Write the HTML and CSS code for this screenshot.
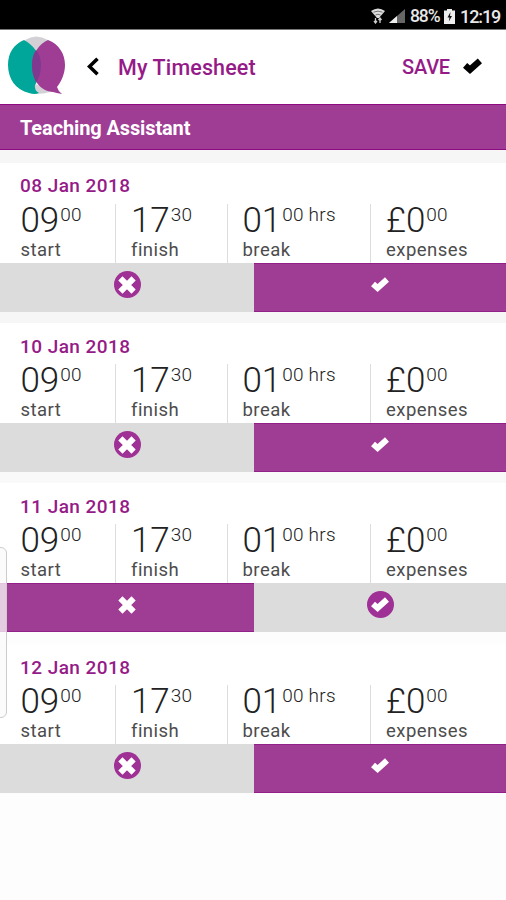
FILE: index.html
```html
<!DOCTYPE html>
<html lang="en">
<head>
<meta charset="utf-8">
<title>My Timesheet</title>
<link rel="stylesheet" href="styles.css">
</head>
<body>
<svg class="defs" aria-hidden="true">
  <symbol id="cross" viewBox="0 0 18 18"><path d="M2.4 2.4 15.6 15.6M15.6 2.4 2.4 15.6" fill="none" stroke="currentColor" stroke-width="6"/></symbol>
  <symbol id="check" viewBox="0 0 18 15"><path d="M2 7 6.6 11 16 2.6" fill="none" stroke="currentColor" stroke-width="6"/></symbol>
</svg>
<div class="status">
  <svg class="wifi" viewBox="0 0 14 16"><path d="M0 3Q7-2 14 3L8 10H6Z" fill="#ddd"/><path d="M2.5 4.2Q7 2 11.5 4.2M4.5 7Q7 5.5 9.5 7" stroke="#555" fill="none" stroke-width=".8"/><path d="M4.5 10v5M3 13l1.5 2L6 13M9 15v-5M7.5 12 9 10l1.5 2" stroke="#ccc" fill="none" stroke-width="1.3"/></svg>
  <svg class="signal" viewBox="0 0 16 14"><path d="M0 14 16 0V14Z" fill="#666"/><path d="M0 14 8 7V14Z" fill="#eee"/></svg>
  <span class="percent">88%</span>
  <svg class="battery" viewBox="0 0 11 15"><path d="M3 0h5v1.5h3V15H0V1.5h3Z" fill="#eee"/><path d="M6.5 3 3.5 8.5h2L4.8 12.5 8 7H6Z" fill="#111"/></svg>
  <span class="clock">12:19</span>
</div>
<header class="header">
  <svg class="logo" viewBox="0 0 57 59"><path d="M17 4Q28-3 40 4L29 20ZM26 47 42 56Q33 59 26 57Z" fill="#d3d1d5"/><path d="M16 4C24 8 32 17 33 29C33 39 29 46 27 49Q26 54 31 57Q27 59 21 57C8 54 0 43 0 29C0 17 6 8 16 4Z" fill="#00a69a"/><path d="M40 4C51 8 57 18 57 29C57 38 53 46 49 51Q50 55 54 58Q48 57 45 56C32 55 24 44 24 29C24 18 31 8 40 4Z" fill="#9f3c94"/><path d="M28 14Q33 20 33 29Q33 40 28 46Q24 39 24 29Q24 20 28 14Z" fill="#81398f"/></svg>
  <svg class="back" viewBox="0 0 12 19"><path d="M10.5 1.8 2.5 9.5 10.5 17.2" fill="none" stroke="#000" stroke-width="3.6"/></svg>
  <h1 class="title">My Timesheet</h1>
  <span class="save">SAVE</span>
  <svg class="save-icon"><use href="#check"/></svg>
</header>
<h2 class="banner">Teaching Assistant</h2>
<main class="list">
  <section class="entry">
    <h3 class="date">08 Jan 2018</h3>
    <div class="fields">
      <div class="field"><div class="value">09<span class="small">00</span></div><div class="label">start</div></div>
      <div class="field"><div class="value">17<span class="small">30</span></div><div class="label">finish</div></div>
      <div class="field"><div class="value">01<span class="small hrs">00 hrs</span></div><div class="label">break</div></div>
      <div class="field"><div class="value">£0<span class="small">00</span></div><div class="label">expenses</div></div>
    </div>
    <div class="actions"><div class="action"><span class="dot"><svg class="x"><use href="#cross"/></svg></span></div><div class="action on"><span class="dot"><svg class="tick"><use href="#check"/></svg></span></div></div>
  </section>
  <section class="entry">
    <h3 class="date">10 Jan 2018</h3>
    <div class="fields">
      <div class="field"><div class="value">09<span class="small">00</span></div><div class="label">start</div></div>
      <div class="field"><div class="value">17<span class="small">30</span></div><div class="label">finish</div></div>
      <div class="field"><div class="value">01<span class="small hrs">00 hrs</span></div><div class="label">break</div></div>
      <div class="field"><div class="value">£0<span class="small">00</span></div><div class="label">expenses</div></div>
    </div>
    <div class="actions"><div class="action"><span class="dot"><svg class="x"><use href="#cross"/></svg></span></div><div class="action on"><span class="dot"><svg class="tick"><use href="#check"/></svg></span></div></div>
  </section>
  <section class="entry">
    <h3 class="date">11 Jan 2018</h3>
    <div class="fields">
      <div class="field"><div class="value">09<span class="small">00</span></div><div class="label">start</div></div>
      <div class="field"><div class="value">17<span class="small">30</span></div><div class="label">finish</div></div>
      <div class="field"><div class="value">01<span class="small hrs">00 hrs</span></div><div class="label">break</div></div>
      <div class="field"><div class="value">£0<span class="small">00</span></div><div class="label">expenses</div></div>
    </div>
    <div class="actions"><div class="action on"><span class="dot"><svg class="x"><use href="#cross"/></svg></span></div><div class="action"><span class="dot"><svg class="tick"><use href="#check"/></svg></span></div></div>
  </section>
  <section class="entry">
    <h3 class="date">12 Jan 2018</h3>
    <div class="fields">
      <div class="field"><div class="value">09<span class="small">00</span></div><div class="label">start</div></div>
      <div class="field"><div class="value">17<span class="small">30</span></div><div class="label">finish</div></div>
      <div class="field"><div class="value">01<span class="small hrs">00 hrs</span></div><div class="label">break</div></div>
      <div class="field"><div class="value">£0<span class="small">00</span></div><div class="label">expenses</div></div>
    </div>
    <div class="actions"><div class="action"><span class="dot"><svg class="x"><use href="#cross"/></svg></span></div><div class="action on"><span class="dot"><svg class="tick"><use href="#check"/></svg></span></div></div>
  </section>
</main>
<div class="edge-handle"></div>
</body>
</html>
```
FILE: styles.css
```css
* { box-sizing: border-box; }
body { margin: 0; height: 900px; overflow: hidden; position: relative; background: #fdfdfd; font-family: Roboto, "Liberation Sans", sans-serif; color: #222; }
h1, h2, h3 { margin: 0; }
svg { display: block; flex: none; }
.defs { position: absolute; width: 0; height: 0; }

.status { height: 30px; background: #000; border-bottom: 1px solid #777; display: flex; align-items: center; padding: 3px 0 0 371px; color: #e8e8e8; font-size: 18px; font-weight: 500; white-space: nowrap; }
.wifi { width: 14px; height: 16px; }
.signal { width: 16px; height: 14px; margin-left: 4px; }
.percent { width: 29px; margin-left: 5px; font-size: 17.5px; letter-spacing: -1.1px; }
.battery { width: 11px; height: 15px; margin-left: 5px; }
.clock { margin-left: 5px; letter-spacing: -1.1px; }

.header { height: 74px; background: #fff; display: flex; align-items: center; padding-left: 8px; color: #951b88; }
.logo { width: 57px; height: 59px; margin-top: -3px; }
.back { width: 12px; height: 19px; margin: -2px 0 0 22px; }
.title { width: 285px; margin-left: 19px; font-size: 21.5px; font-weight: 500; line-height: 26px; letter-spacing: 0.13px; white-space: nowrap; padding-top: 1px; }
.save { width: 50px; font-size: 20px; font-weight: 500; line-height: 26px; letter-spacing: -0.2px; margin-left: -1px; }
.save-icon { width: 19px; height: 16px; margin: -2px 0 0 11px; color: #000; }

.banner { height: 46px; background: #9f3c94; border: solid #8d0a80; border-width: 1px 0; padding: 1px 0 0 20px; font-size: 20px; font-weight: 700; line-height: 45px; color: #fff; letter-spacing: -0.12px; }

.list { background: #fff; }
.entry { border-top: 11px solid #f9f9f9; }
.entry:first-child { border-top: 13px solid #f6f6f6; }
.entry:nth-child(2) { border-top-color: #f6f6f6; }
.entry:nth-child(4) { border-top: 12px solid #fdfdfd; }
.date { height: 41px; padding: 12px 0 0 20px; font-size: 19px; font-weight: 500; line-height: 22px; letter-spacing: 0.45px; color: #951b88; }
.entry:nth-child(n+2) .date { padding-top: 13px; }
.fields { height: 59px; display: grid; grid-template-columns: 115px 112px 143px 1fr; }
.field { padding-left: 15px; border-left: 1px solid #ddd; white-space: nowrap; }
.field:first-child { border: 0; padding-left: 20.5px; }
.field:nth-child(3) { padding-left: 14.5px; }
.value { height: 34px; font-size: 35px; font-weight: 300; line-height: 33px; letter-spacing: -0.1px; }
.small { font-size: 19px; line-height: 1px; position: relative; top: -11px; margin-left: 1px; letter-spacing: 0.25px; }
.label { font-size: 18.5px; font-weight: 400; line-height: 24px; letter-spacing: 0.45px; color: #4c4c4c; }
.actions { height: 49px; display: grid; grid-template-columns: 254px 1fr; background: #dcdcdc; }
.action { display: flex; justify-content: center; padding-top: 8px; color: #fff; }
.on { background: #9f3c94; border: solid #93208a; border-width: 1px 0; padding-top: 7px; }
.dot { width: 27px; height: 27px; border-radius: 50%; background: #9f3095; display: flex; align-items: center; justify-content: center; }
.on .dot { background: none; }
.x { width: 18px; height: 18px; }
.tick { width: 18px; height: 15px; }

.edge-handle { position: absolute; left: -10px; top: 547px; width: 17px; height: 171px; border: 1px solid #ccc; border-radius: 6px; background: rgba(250, 250, 250, 0.76); }
```
